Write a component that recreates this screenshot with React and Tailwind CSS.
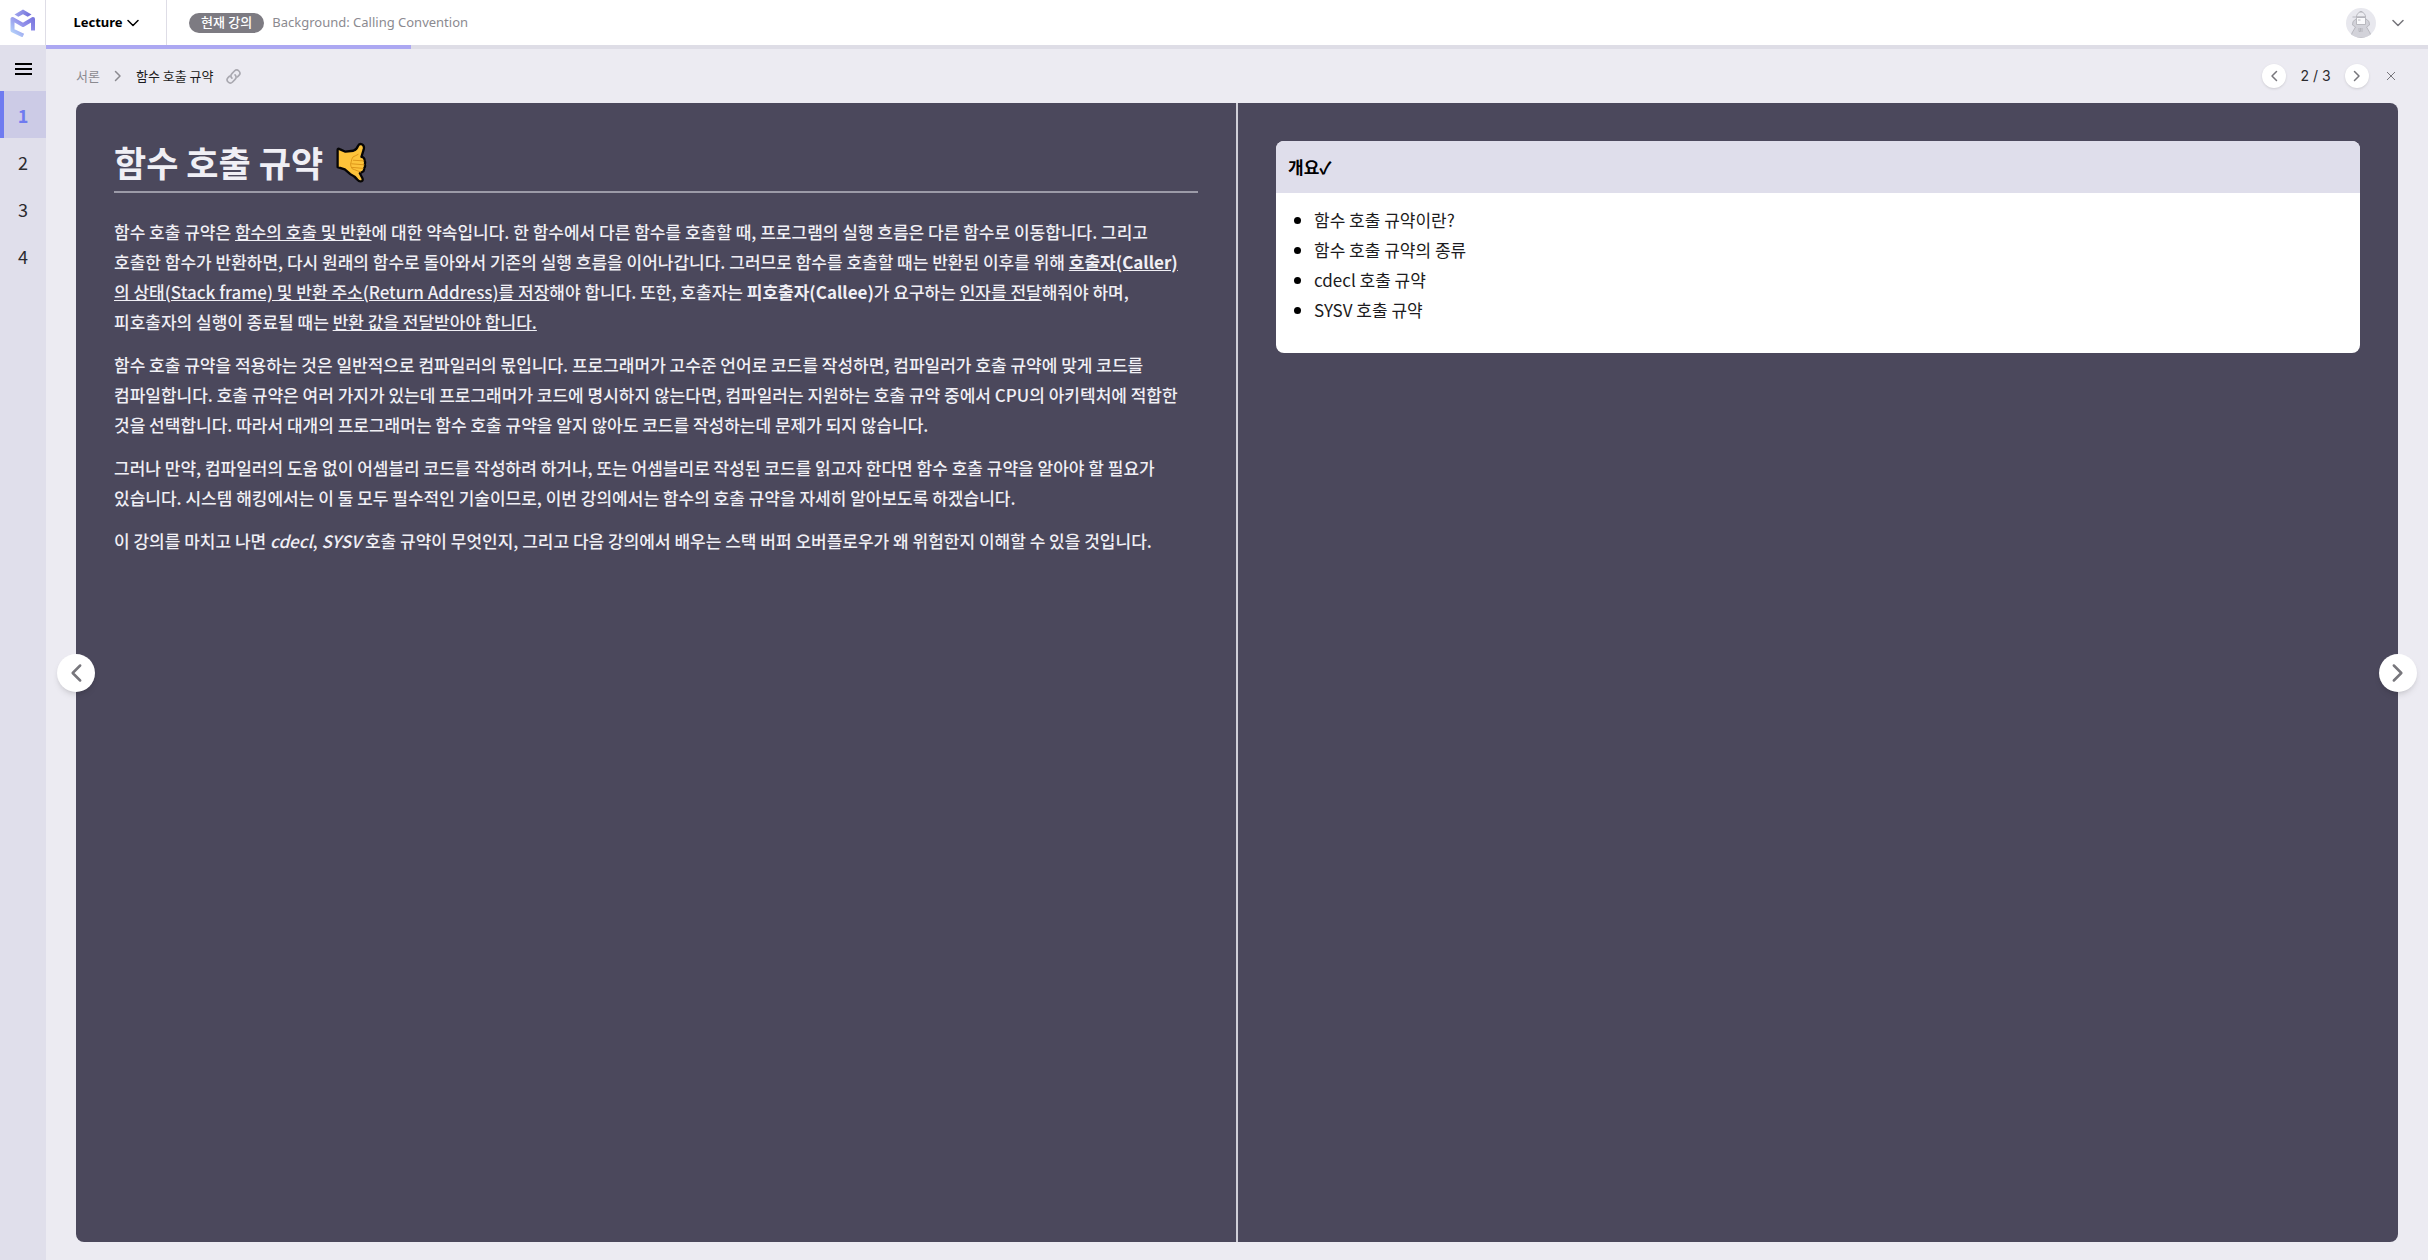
import React from "react";

const chapters = [1, 2, 3, 4];
const topics = ["함수 호출 규약이란?", "함수 호출 규약의 종류", "cdecl 호출 규약", "SYSV 호출 규약"];

function Chevron({ direction = "right", className }) {
  const paths = {
    right: "M7 3l9 9-9 9",
    left: "M17 3l-9 9 9 9",
    down: "M2 7l10 10L22 7",
  };
  return (
    <svg viewBox="0 0 24 24" fill="none" stroke="currentColor" strokeLinecap="round" strokeLinejoin="round" className={className} aria-hidden="true">
      <path d={paths[direction]} />
    </svg>
  );
}

function Logo() {
  return (
    <svg viewBox="10 8 26 28" className="h-7 w-[26px]" fill="none" aria-hidden="true">
      <defs>
        <linearGradient id="logoStroke" gradientUnits="userSpaceOnUse" x1="34" y1="14" x2="14" y2="34">
          <stop offset="0" stopColor="#7471dc" />
          <stop offset="0.5" stopColor="#9290ea" />
          <stop offset="1" stopColor="#b4d2fa" />
        </linearGradient>
        <linearGradient id="logoTop" gradientUnits="userSpaceOnUse" x1="15" y1="9" x2="32" y2="16">
          <stop offset="0" stopColor="#a3a9ef" />
          <stop offset="1" stopColor="#6c69d8" />
        </linearGradient>
      </defs>
      <path d="M14.500 13.600l8.500-5.100 8.500 5.100-3.800 2.200-4.700-2.600-4.700 2.600z" fill="url(#logoTop)" />
      <path d="M33 29.500V18L23 24l-10.500-6v11.500l10.800 5" stroke="url(#logoStroke)" strokeWidth="4" strokeLinejoin="round" />
    </svg>
  );
}

function LinkIcon() {
  return (
    <svg viewBox="0 0 24 24" fill="none" stroke="currentColor" strokeWidth="2.6" strokeLinecap="round" className="size-[15px]" aria-hidden="true">
      <path d="M9.500 14.500a5 5 0 0 1 0-7l4-4.200a5 5 0 0 1 7.200 7l-2.400 2.400" />
      <path d="M14.500 9.500a5 5 0 0 1 0 7l-4 4.200a5 5 0 0 1-7.200-7l2.400-2.400" />
    </svg>
  );
}

function Avatar() {
  return (
    <svg viewBox="0 0 30 30" className="size-[30px]" aria-hidden="true">
      <defs>
        <clipPath id="avatarClip"><circle cx="15" cy="15" r="15" /></clipPath>
      </defs>
      <g clipPath="url(#avatarClip)" stroke="#b3b3ba" strokeWidth="0.9">
        <rect width="30" height="30" fill="#e8e8ee" stroke="none" />
        <path d="M4.500 30l1.500-5 3.500-6-3-2 .5-3.500 3-2.500h10l3 2.500.5 3.500-3 2 3.500 6 1.500 5z" fill="#d2d2d9" />
        <path d="M10.500 9.500h9v7h-9z" fill="#fafafc" />
        <path d="M10.500 9a4.500 5 0 0 1 9 0z" fill="#ececf1" />
        <path d="M6.500 9h13M13.500 4q1.500-1.500 3 0M12 12h2.500M13 20v3.500h1.500V20M16 20v4" fill="none" />
      </g>
    </svg>
  );
}

function CallHand() {
  return (
    <svg viewBox="30 9 98 124" className="h-[41px] w-8" role="img" aria-label="전화 손 모양">
      <path
        d="M38 32Q38 27 44 30L62 38 86 35Q97 31 100 21 104 12 112 15 121 19 118 31L111 54Q122 56 120 65 124 70 121 77 124 83 119 89 121 97 112 101L106 104 114 119Q117 128 109 129 104 130 98 123 90 112 76 106L60 92 38 85Z"
        fill="#fdc33a" stroke="#060505" strokeWidth="7" strokeLinejoin="round"
      />
      <path d="M101 46Q94 50 85 54 80 61 80 68 76 76 79 83 80 92 90 93L108 100M86 64L118 66M81 75L119 78M82 86L116 89" fill="none" stroke="#dc9419" strokeWidth="3" strokeLinecap="round" strokeLinejoin="round" />
    </svg>
  );
}

function Header() {
  return (
    <header className="flex h-[45px] shrink-0 items-stretch bg-white font-['Noto_Sans','Noto_Sans_CJK_KR',sans-serif] text-[13px]">
      <a href="#home" aria-label="홈" className="flex w-[46px] shrink-0 items-center justify-center border-r border-[#dedde6]">
        <Logo />
      </a>
      <button type="button" className="flex w-[121px] items-center justify-center gap-1 border-r border-[#dedde6] pt-px font-bold text-black">
        Lecture
        <Chevron direction="down" className="size-3 stroke-3" />
      </button>
      <div className="flex flex-1 items-center gap-2 pt-px pl-[22px]">
        <span className="flex h-5 items-center rounded-full bg-[#7d7b82] px-3 font-medium text-white">현재 강의</span>
        <span className="text-[#8b8a90]">Background: Calling Convention</span>
      </div>
      <button type="button" aria-label="계정 메뉴" className="flex items-center gap-4 pr-6 text-[#77767c]">
        <Avatar />
        <Chevron direction="down" className="size-3 stroke-3" />
      </button>
    </header>
  );
}

function Sidebar() {
  return (
    <nav aria-label="목차" className="flex w-[46px] shrink-0 flex-col bg-[#e0dfeb]">
      <button type="button" aria-label="메뉴" className="flex h-[46px] flex-col items-center justify-center gap-[3px] pt-[2px]">
        <span className="h-[2px] w-[17px] bg-black" />
        <span className="h-[2px] w-[17px] bg-black" />
        <span className="h-[2px] w-[17px] bg-black" />
      </button>
      {chapters.map((n) => (
        <a
          key={n}
          href={"#chapter-" + n}
          className={
            n === 1
              ? "flex h-[47px] items-center justify-center border-l-4 border-[#6f7bf0] bg-[#cccbe6] pt-px pr-1 text-lg font-bold text-[#6f7bf0]"
              : "flex h-[47px] items-center justify-center pt-px text-lg text-[#2c2b30]"
          }
        >
          {n}
        </a>
      ))}
    </nav>
  );
}

function Toolbar() {
  return (
    <div className="flex h-[54px] shrink-0 items-center justify-between text-[13px]">
      <div className="flex items-center">
        <a href="#intro" className="text-[#8b8a90]">서론</a>
        <Chevron className="mx-3 size-3 stroke-3 text-[#8b8a90]" />
        <span className="text-[#1c1b20]">함수 호출 규약</span>
        <button type="button" aria-label="링크 복사" className="ml-3 text-[#a9a8b0]"><LinkIcon /></button>
      </div>
      <div className="flex items-center text-[#77767c]">
        <button type="button" aria-label="이전" className="flex size-6 items-center justify-center rounded-full bg-white shadow-sm">
          <Chevron direction="left" className="size-3 stroke-3" />
        </button>
        <span className="w-[59px] text-center font-['Inter',sans-serif] text-sm text-[#2c2b30]">2 / 3</span>
        <button type="button" aria-label="다음" className="flex size-6 items-center justify-center rounded-full bg-white shadow-sm">
          <Chevron className="size-3 stroke-3" />
        </button>
        <button type="button" aria-label="닫기" className="mr-[3px] ml-[18px]">
          <svg viewBox="0 0 8 8" className="size-2 overflow-visible" stroke="currentColor" fill="none" aria-hidden="true"><path d="M0 0l8 8M8 0L0 8" /></svg>
        </button>
      </div>
    </div>
  );
}

function Article() {
  return (
    <article className="flex-1 border-r-2 border-[#d0cfd8] px-[38px] pt-[34px] text-[17px] leading-[30px] font-medium break-keep text-[#f0eff5]">
      <h1 className="flex items-center gap-3 border-b-2 border-[#9c9ba8] pb-1 text-[35px] leading-[50px] font-bold">
        함수 호출 규약
        <CallHand />
      </h1>
      <div className="mt-6 flex flex-col gap-[13px]">
        <p>
          함수 호출 규약은 <u>함수의 호출 및 반환</u>에 대한 약속입니다. 한 함수에서 다른 함수를 호출할 때, 프로그램의 실행 흐름은 다른 함수로 이동합니다. 그리고<br />
          호출한 함수가 반환하면, 다시 원래의 함수로 돌아와서 기존의 실행 흐름을 이어나갑니다. 그러므로 함수를 호출할 때는 반환된 이후를 위해 <u><strong>호출자(Caller)</strong><br />의 상태(Stack frame) 및 반환 주소(Return Address)를 저장</u>해야 합니다. 또한, 호출자는 <strong>피호출자(Callee)</strong>가 요구하는 <u>인자를 전달</u>해줘야 하며,<br />
          피호출자의 실행이 종료될 때는 <u>반환 값을 전달받아야 합니다.</u>
        </p>
        <p>
          함수 호출 규약을 적용하는 것은 일반적으로 컴파일러의 몫입니다. 프로그래머가 고수준 언어로 코드를 작성하면, 컴파일러가 호출 규약에 맞게 코드를<br />
          컴파일합니다. 호출 규약은 여러 가지가 있는데 프로그래머가 코드에 명시하지 않는다면, 컴파일러는 지원하는 호출 규약 중에서 CPU의 아키텍처에 적합한<br />
          것을 선택합니다. 따라서 대개의 프로그래머는 함수 호출 규약을 알지 않아도 코드를 작성하는데 문제가 되지 않습니다.
        </p>
        <p>
          그러나 만약, 컴파일러의 도움 없이 어셈블리 코드를 작성하려 하거나, 또는 어셈블리로 작성된 코드를 읽고자 한다면 함수 호출 규약을 알아야 할 필요가<br />
          있습니다. 시스템 해킹에서는 이 둘 모두 필수적인 기술이므로, 이번 강의에서는 함수의 호출 규약을 자세히 알아보도록 하겠습니다.
        </p>
        <p>
          이 강의를 마치고 나면 <em>cdecl</em>, <em>SYSV</em> 호출 규약이 무엇인지, 그리고 다음 강의에서 배우는 스택 버퍼 오버플로우가 왜 위험한지 이해할 수 있을 것입니다.
        </p>
      </div>
    </article>
  );
}

function Overview() {
  return (
    <aside className="flex-1 px-[38px] pt-[38px] text-[17px] leading-[30px] text-[#1c1b20]">
      <section className="overflow-hidden rounded-lg bg-white">
        <h2 className="bg-[#dfdeeb] px-3 py-[11px] font-bold text-black">개요✓</h2>
        <ul className="list-disc pt-3 pr-3 pb-7 pl-[38px] marker:text-black">
          {topics.map((t) => <li key={t}>{t}</li>)}
        </ul>
      </section>
    </aside>
  );
}

export default function App() {
  return (
    <div className="flex min-h-screen flex-col bg-[#ecebf2] font-['Noto_Sans_CJK_KR',sans-serif]">
      <Header />
      <div className="flex flex-1">
        <Sidebar />
        <main className="flex min-w-0 flex-1 flex-col">
          <div role="progressbar" aria-label="진도" aria-valuenow={15} className="h-1 bg-[#dedde6]">
            <div className="h-full w-[365px] bg-[#aca8f2]" />
          </div>
          <div className="flex flex-1 flex-col px-[30px] pb-[18px]">
            <Toolbar />
            <div className="relative flex flex-1 rounded-lg bg-[#4b485c]">
              <Article />
              <Overview />
              <button type="button" aria-label="이전 페이지" className="absolute top-1/2 -left-[19px] flex size-[38px] -translate-y-1/2 items-center justify-center rounded-full bg-white text-[#77767c] shadow-md">
                <Chevron direction="left" className="size-5 stroke-3" />
              </button>
              <button type="button" aria-label="다음 페이지" className="absolute top-1/2 -right-[19px] flex size-[38px] -translate-y-1/2 items-center justify-center rounded-full bg-white text-[#77767c] shadow-md">
                <Chevron className="size-5 stroke-3" />
              </button>
            </div>
          </div>
        </main>
      </div>
    </div>
  );
}
